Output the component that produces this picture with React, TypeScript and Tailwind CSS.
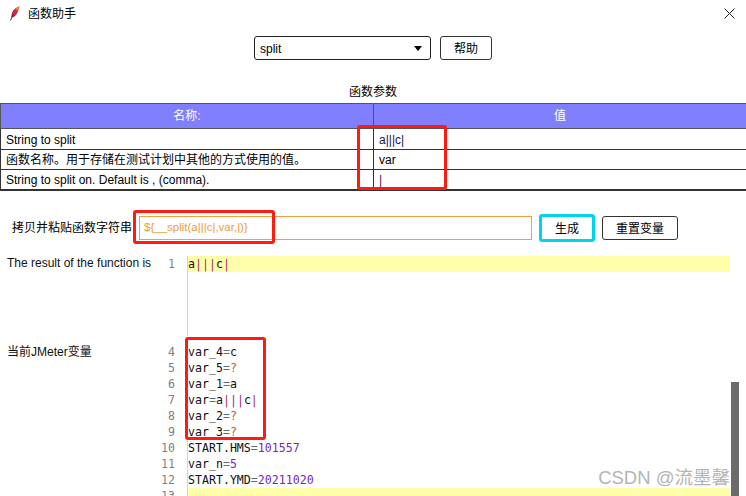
import { Fragment, type ReactNode } from "react";

const uiFont = "font-['Liberation_Sans','Noto_Sans_CJK_SC',sans-serif]";
const monoFont = "font-['DejaVu_Sans_Mono',monospace]";

const Pipe = () => <span className="text-[#a0305f]">|</span>;
const Eq = () => <span className="text-[#5f6f7f]">=</span>;
const Q = () => <span className="text-[#a8623c]">?</span>;
const Num = ({ v }: { v: string }) => <span className="text-[#7a1fc4]">{v}</span>;

const pipes: ReactNode = (
  <>
    a<Pipe />
    <Pipe />
    <Pipe />c<Pipe />
  </>
);

const varLines: { n: number; code: ReactNode; hl?: boolean }[] = [
  { n: 4, code: <>var_4<Eq />c</> },
  { n: 5, code: <>var_5<Eq /><Q /></> },
  { n: 6, code: <>var_1<Eq />a</> },
  { n: 7, code: <>var<Eq />{pipes}</> },
  { n: 8, code: <>var_2<Eq /><Q /></> },
  { n: 9, code: <>var_3<Eq /><Q /></> },
  { n: 10, code: <>START.HMS<Eq /><Num v="101557" /></> },
  { n: 11, code: <>var_n<Eq /><Num v="5" /></> },
  { n: 12, code: <>START.YMD<Eq /><Num v="20211020" /></> },
  { n: 13, code: "", hl: true },
];

const rows: { name: string; value: ReactNode }[] = [
  { name: "String to split", value: <span className="text-[#20104a]">a|||c|</span> },
  { name: "函数名称。用于存储在测试计划中其他的方式使用的值。", value: "var" },
  { name: "String to split on. Default is , (comma).", value: <span className="text-[#4a0a6a]">|</span> },
];

const Editor = ({
  label,
  lines,
  className,
  labelClass,
}: {
  label: string;
  lines: { n: number; code: ReactNode; hl?: boolean }[];
  className: string;
  labelClass: string;
}) => (
  <div className={`flex overflow-hidden ${className}`}>
    <div className={`w-[150px] shrink-0 pl-[7px] text-xs whitespace-nowrap text-[#111] ${labelClass}`}>{label}</div>
    <div className={`w-[25px] shrink-0 text-right text-[11.6px] leading-[16px] text-[#808080] ${monoFont}`}>
      {lines.map((l) => (
        <div key={l.n} className="h-4">
          {l.n}
        </div>
      ))}
    </div>
    <div className={`ml-3 w-[543px] border-l border-[#d4d4d4] text-[11.6px] leading-[16px] text-[#111] ${monoFont}`}>
      {lines.map((l) => (
        <div key={l.n} className={`h-4 whitespace-pre ${l.hl ? "bg-[#ffffaa]" : ""}`}>
          {l.code}
        </div>
      ))}
    </div>
  </div>
);

export default function App() {
  return (
    <div className={`relative flex h-[496px] w-[746px] flex-col overflow-hidden bg-white text-black ${uiFont}`}>
      {/* 타이틀 바 */}
      <div className="flex h-[27px] shrink-0 items-center pl-[10px] pr-[11px]">
        <svg width="10" height="15" viewBox="0 0 10 15" className="shrink-0">
          <path d="M9.5 0.5 C6.5 1 3.5 3 2 6.5 L1 11.5 L4 11 C6.5 9.5 7.8 6.5 8.4 3.8 Z" fill="#c8284c" />
          <path d="M9.5 0.2 C7.8 0.8 6.2 2 5.2 3.4 L8.2 4.6 C8.9 3.2 9.4 1.8 9.5 0.2 Z" fill="#f0842a" />
          <path d="M3.5 8 L0.5 14.5" stroke="#4a2a6a" strokeWidth="1" />
        </svg>
        <span className="ml-2 text-xs leading-none">函数助手</span>
        <svg width="11" height="11" viewBox="0 0 11 11" className="ml-auto" fill="none" stroke="#222" strokeWidth="1">
          <path d="M0.5 0.5 L10.5 10.5 M10.5 0.5 L0.5 10.5" />
        </svg>
      </div>

      {/* 함수 선택 */}
      <div className="mt-[9px] flex h-6 shrink-0 justify-center gap-[9px]">
        <div className="flex w-[177px] items-center justify-between rounded-[3px] border border-[#222] pl-[5px] pr-[8px] pt-[1px] text-xs">
          split
          <span className="h-0 w-0 border-x-[4px] border-t-[5px] border-x-transparent border-t-black" />
        </div>
        <button className="w-[52px] rounded-[3px] border border-[#333] pt-[2px] text-xs">帮助</button>
      </div>

      <div className="mt-6 h-4 shrink-0 text-center text-xs leading-4">函数参数</div>

      {/* 파라미터 테이블 */}
      <div className="mt-[3px] grid shrink-0 grid-cols-[373px_1fr] border-b-2 border-[#333] text-xs">
        <div className="flex h-[26px] items-center justify-center border-y border-l border-[#555] bg-[#8080ff] text-white">名称:</div>
        <div className="flex h-[26px] items-center justify-center border-y border-l border-[#555] bg-[#8080ff] text-white">值</div>
        {rows.map((r, i) => (
          <Fragment key={r.name}>
            <div className={`flex h-5 items-center border-l border-[#333] pl-[5px] pt-[1px] ${i > 0 ? "border-t" : ""}`}>{r.name}</div>
            <div className={`flex h-5 items-center border-l border-[#333] pl-[5px] pt-[1px] ${i > 0 ? "border-t" : ""}`}>{r.value}</div>
          </Fragment>
        ))}
      </div>

      {/* 함수 문자열 */}
      <div className="mt-[23px] flex h-7 shrink-0 items-center pl-3">
        <span className="w-[127px] shrink-0 text-xs whitespace-nowrap">拷贝并粘贴函数字符串</span>
        <div className="flex h-6 w-[393px] items-center border border-[#f0a040] pl-1 text-[11.5px] text-[#f09a3e]">
          {"${__split(a|||c|,var,|)}"}
        </div>
        <button className="ml-[7px] h-7 w-14 rounded-[3px] border-[3px] border-[#00d4e8] pt-[1px] text-xs">生成</button>
        <button className="ml-[7px] h-6 w-[76px] rounded-[3px] border border-[#333] pt-[1px] text-xs">重置变量</button>
      </div>

      <Editor
        label="The result of the function is"
        labelClass="leading-[14px]"
        className="mt-[14px] h-20 shrink-0"
        lines={[{ n: 1, code: pipes, hl: true }]}
      />
      <Editor label="当前JMeter变量" labelClass="leading-4" className="mt-2 grow" lines={varLines} />

      {/* 스크롤바, 워터마크, 빨간 표시 */}
      <div className="absolute left-[731px] top-[382px] h-[114px] w-2 bg-[#6b6b6b]" />
      <div className="absolute right-[16px] top-[466px] text-[18.5px] leading-6 whitespace-nowrap text-[#b4b4b4]">CSDN @流墨馨</div>
      <div className="absolute left-[357px] top-[125px] h-[65px] w-[90px] rounded-[3px] border-[3px] border-[#ff1a12]" />
      <div className="absolute left-[133px] top-[210px] h-[34px] w-[142px] rounded-[3px] border-[3px] border-[#ff1a12]" />
      <div className="absolute left-[185px] top-[337px] h-[103px] w-[81px] rounded-[3px] border-[3px] border-[#ff1a12]" />
    </div>
  );
}
